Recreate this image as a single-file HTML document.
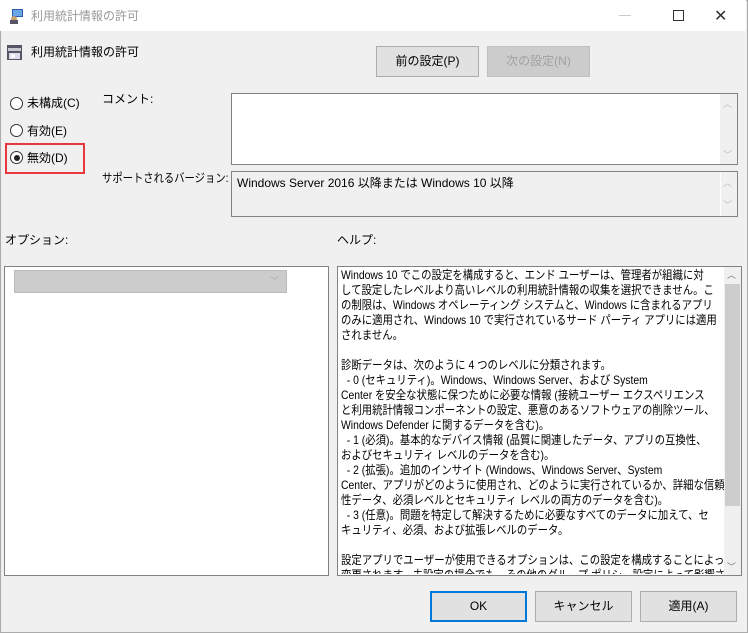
<!DOCTYPE html>
<html><head><meta charset="utf-8"><style>
*{box-sizing:border-box;margin:0;padding:0}
body{width:748px;height:633px;background:#f0f0f0;font-family:"Liberation Sans","Noto Sans CJK JP",sans-serif;font-size:12px;color:#000;position:relative;overflow:hidden}
.win{position:absolute;left:0;top:0;width:748px;height:633px;border:1px solid #aaa}
.title{position:absolute;left:0;top:0;width:746px;height:31px;background:#fff}
.abs{position:absolute;white-space:nowrap}
.btn{position:absolute;height:31px;border:1px solid #adadad;background:#e1e1e1;text-align:center;line-height:29px;font-size:12px}
.box{position:absolute;border:1px solid #828282}
.radio{position:absolute;width:13px;height:13px;border:1px solid #333;border-radius:50%;background:#fff}
.help div{white-space:nowrap;height:15px;line-height:15px;transform:scaleX(0.865);transform-origin:0 0}
</style></head><body>
<div class="win"></div>
<div class="title"></div>
<svg class="abs" style="left:9px;top:8px" width="16" height="16"><rect x="3" y="1" width="11" height="8" fill="#2a5aa8"/><rect x="4" y="2" width="9" height="6" fill="#6aa6e8"/><circle cx="5" cy="11" r="3" fill="#c9a070"/><rect x="1" y="12" width="8" height="4" fill="#556"/></svg>
<div class="abs" style="left:31px;top:7px;color:#999;font-size:12px">利用統計情報の許可</div>
<div class="abs" style="left:619px;top:15px;width:12px;height:1px;background:#ccc"></div>
<div class="abs" style="left:673px;top:10px;width:11px;height:11px;border:1px solid #333"></div>
<div class="abs" style="left:714px;top:6px;font-size:16px;color:#333">✕</div>

<svg class="abs" style="left:7px;top:45px" width="16" height="16"><rect x="0" y="0" width="15" height="15" fill="#556"/><rect x="1" y="3" width="13" height="3" fill="#c8c8d0"/><rect x="2" y="8" width="11" height="6" fill="#dde"/><circle cx="6" cy="11" r="2" fill="#fff"/></svg>
<div class="abs" style="left:31px;top:43px;font-size:12px">利用統計情報の許可</div>

<div class="btn" style="left:376px;top:46px;width:103px">前の設定(P)</div>
<div class="btn" style="left:487px;top:46px;width:103px;background:#cccccc;border-color:#bfbfbf;color:#a0a0a0">次の設定(N)</div>

<div class="radio" style="left:10px;top:97px"></div>
<div class="abs" style="left:27px;top:94px">未構成(C)</div>
<div class="radio" style="left:10px;top:124px"></div>
<div class="abs" style="left:27px;top:122px">有効(E)</div>
<div class="radio" style="left:10px;top:151px"></div>
<div class="abs" style="left:14px;top:155px;width:6px;height:6px;border-radius:50%;background:#222"></div>
<div class="abs" style="left:27px;top:149px">無効(D)</div>
<div class="abs" style="left:5px;top:143px;width:80px;height:31px;border:2px solid #e8383d"></div>

<div class="abs" style="left:102px;top:90px">コメント:</div>
<div class="box" style="left:231px;top:93px;width:507px;height:72px;background:#fff"></div>
<div class="abs" style="left:720px;top:94px;width:17px;height:70px;background:#f0f0f0"></div>
<div class="abs" style="left:723px;top:97px;color:#bbb;font-size:9px">︿</div>
<div class="abs" style="left:723px;top:148px;color:#bbb;font-size:9px">﹀</div>

<div class="abs" style="left:102px;top:169px;transform:scaleX(0.86);transform-origin:0 0">サポートされるバージョン:</div>
<div class="box" style="left:231px;top:171px;width:507px;height:46px;background:#f0f0f0"></div>
<div class="abs" style="left:720px;top:172px;width:1px;height:44px;background:#fff"></div>
<div class="abs" style="left:237px;top:174px">Windows Server 2016 以降または Windows 10 以降</div>
<div class="abs" style="left:723px;top:176px;color:#bbb;font-size:9px">︿</div>
<div class="abs" style="left:723px;top:198px;color:#bbb;font-size:9px">﹀</div>

<div class="abs" style="left:5px;top:231px">オプション:</div>
<div class="abs" style="left:337px;top:231px">ヘルプ:</div>

<div class="box" style="left:4px;top:266px;width:325px;height:310px;background:#fff"></div>
<div class="abs" style="left:14px;top:270px;width:273px;height:23px;background:#ccc;border:1px solid #bcbcbc"></div>
<div class="abs" style="left:270px;top:274px;color:#aaa;font-size:9px">﹀</div>

<div class="box" style="left:337px;top:266px;width:405px;height:310px;background:#fff"></div>
<div class="abs help" style="left:341px;top:268px;width:383px;height:306px;overflow:hidden">
<div>Windows 10 でこの設定を構成すると、エンド ユーザーは、管理者が組織に対</div>
<div>して設定したレベルより高いレベルの利用統計情報の収集を選択できません。こ</div>
<div>の制限は、Windows オペレーティング システムと、Windows に含まれるアプリ</div>
<div>のみに適用され、Windows 10 で実行されているサード パーティ アプリには適用</div>
<div>されません。</div>
<div></div>
<div>診断データは、次のように 4 つのレベルに分類されます。</div>
<div>&nbsp; - 0 (セキュリティ)。Windows、Windows Server、および System</div>
<div>Center を安全な状態に保つために必要な情報 (接続ユーザー エクスペリエンス</div>
<div>と利用統計情報コンポーネントの設定、悪意のあるソフトウェアの削除ツール、</div>
<div>Windows Defender に関するデータを含む)。</div>
<div>&nbsp; - 1 (必須)。基本的なデバイス情報 (品質に関連したデータ、アプリの互換性、</div>
<div>およびセキュリティ レベルのデータを含む)。</div>
<div>&nbsp; - 2 (拡張)。追加のインサイト (Windows、Windows Server、System</div>
<div>Center、アプリがどのように使用され、どのように実行されているか、詳細な信頼</div>
<div>性データ、必須レベルとセキュリティ レベルの両方のデータを含む)。</div>
<div>&nbsp; - 3 (任意)。問題を特定して解決するために必要なすべてのデータに加えて、セ</div>
<div>キュリティ、必須、および拡張レベルのデータ。</div>
<div></div>
<div>設定アプリでユーザーが使用できるオプションは、この設定を構成することによって</div>
<div>変更されます。未設定の場合でも、その他のグループ ポリシー設定によって影響さ</div>
</div>
<div class="abs" style="left:724px;top:267px;width:17px;height:308px;background:#f0f0f0"></div>
<div class="abs" style="left:725px;top:284px;width:15px;height:222px;background:#cdcdcd"></div>
<div class="abs" style="left:727px;top:268px;color:#777;font-size:9px">︿</div>
<div class="abs" style="left:727px;top:560px;color:#777;font-size:9px">﹀</div>

<div class="btn" style="left:430px;top:591px;width:97px;border:2px solid #0078d7;line-height:27px">OK</div>
<div class="btn" style="left:535px;top:591px;width:97px">キャンセル</div>
<div class="btn" style="left:640px;top:591px;width:97px">適用(A)</div>
</body></html>
